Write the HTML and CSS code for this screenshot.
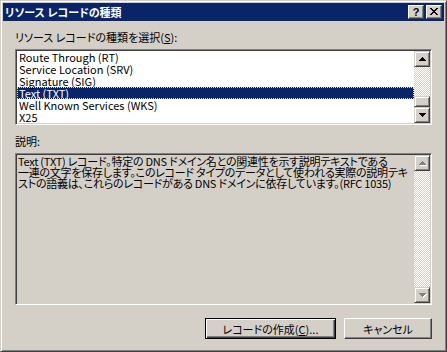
FILE: index.html
```html
<!DOCTYPE html>
<html lang="ja">
<head>
    <meta charset="UTF-8">
    <title>リソース レコードの種類</title>
    <link rel="stylesheet" href="styles.css">
</head>
<body>
    <div class="window">
        <!-- Title bar -->
        <div class="titlebar">
            <span class="title">リソース レコードの種類</span>
            <div class="caption-buttons">
                <div class="caption-btn help">?</div>
                <div class="caption-btn">
                    <svg width="8" height="7" viewBox="0 0 8 7" shape-rendering="crispEdges">
                        <path d="M0 0h2v1h-2zM6 0h2v1h-2zM1 1h2v1h-2zM5 1h2v1h-2zM2 2h4v1h-4zM3 3h2v1h-2zM2 4h4v1h-4zM1 5h2v1h-2zM5 5h2v1h-2zM0 6h2v1h-2zM6 6h2v1h-2z" fill="#000"/>
                    </svg>
                </div>
            </div>
        </div>

        <div class="content">
            <div class="label">リソース レコードの種類を選択(<u>S</u>):</div>

            <!-- Record type list -->
            <div class="listbox">
                <ul class="items">
                    <li>Route Through (RT)</li>
                    <li>Service Location (SRV)</li>
                    <li>Signature (SIG)</li>
                    <li class="selected">Text (TXT)</li>
                    <li>Well Known Services (WKS)</li>
                    <li>X25</li>
                </ul>
                <div class="scrollbar">
                    <div class="sb-btn">
                        <svg width="7" height="4" viewBox="0 0 7 4" shape-rendering="crispEdges"><path d="M3 0h1v1h1v1h1v1h1v1h-7v-1h1v-1h1v-1h1z" fill="#000"/></svg>
                    </div>
                    <div class="sb-track"></div>
                    <div class="sb-thumb"></div>
                    <div class="sb-btn">
                        <svg width="7" height="4" viewBox="0 0 7 4" shape-rendering="crispEdges"><path d="M0 0h7v1h-1v1h-1v1h-1v1h-1v-1h-1v-1h-1v-1h-1z" fill="#000"/></svg>
                    </div>
                </div>
            </div>

            <div class="label desc-label">説明:</div>

            <!-- Description (read only) -->
            <div class="description">
                <div class="desc-text">
                    Text (TXT) レコード。特定の DNS ドメイン名との関連性を示す説明テキストである<br>
                    一連の文字を保存します。このレコード タイプのデータとして使われる実際の説明テキ<br>
                    ストの語義は、これらのレコードがある DNS ドメインに依存しています。(RFC 1035)
                </div>
                <div class="scrollbar">
                    <div class="sb-btn disabled">
                        <svg width="8" height="5" viewBox="0 0 8 5" shape-rendering="crispEdges"><path d="M4 1h1v1h1v1h1v1h1v1h-7v-1z" fill="#fff"/><path d="M3 0h1v1h1v1h1v1h1v1h-7v-1h1v-1h1v-1h1z" fill="#808080"/></svg>
                    </div>
                    <div class="sb-track"></div>
                    <div class="sb-btn disabled">
                        <svg width="8" height="5" viewBox="0 0 8 5" shape-rendering="crispEdges"><path d="M1 1h7v1h-1v1h-1v1h-1v1h-1v-1h-1v-1h-1v-1h-1z" fill="#fff"/><path d="M0 0h7v1h-1v1h-1v1h-1v1h-1v-1h-1v-1h-1v-1h-1z" fill="#808080"/></svg>
                    </div>
                </div>
            </div>

            <!-- Buttons -->
            <div class="buttons">
                <div class="btn default">レコードの作成(<u>C</u>)...</div>
                <div class="btn cancel">キャンセル</div>
            </div>
        </div>
    </div>
</body>
</html>
```

FILE: styles.css
```css
* {
    box-sizing: border-box;
}

html, body {
    margin: 0;
}

body {
    font-family: "Noto Sans CJK JP", sans-serif;
    font-size: 11px;
    line-height: 12px;
    font-feature-settings: "palt";
    color: #000;
    background-color: #d4d0c8;
}

/* Window frame */
.window {
    width: 447px;
    height: 352px;
    padding: 2px;
    border: 1px solid;
    border-color: #d4d0c8 #404040 #404040 #d4d0c8;
    box-shadow: inset 1px 1px #fff, inset -1px -1px #808080;
    background-color: #d4d0c8;
    display: flex;
    flex-direction: column;
}

/* Title bar */
.titlebar {
    height: 18px;
    background-color: #0a246a;
    color: #fff;
    font-weight: bold;
    display: flex;
    align-items: center;
    justify-content: space-between;
    padding: 0 2px 0 2px;
}

.caption-buttons {
    display: flex;
    gap: 2px;
}

.caption-btn {
    width: 16px;
    height: 14px;
    background-color: #d4d0c8;
    border: 1px solid;
    border-color: #fff #404040 #404040 #fff;
    box-shadow: inset -1px -1px #808080;
    display: flex;
    align-items: center;
    justify-content: center;
    padding-bottom: 1px;
}

.caption-btn.help {
    font-family: "Liberation Sans", sans-serif;
    font-size: 11px;
    font-weight: bold;
    color: #000;
}

/* Content */
.content {
    flex: 1;
    padding: 10px 12px 0 12px;
    display: flex;
    flex-direction: column;
}

.label {
    height: 12px;
    margin-bottom: 6px;
}

.desc-label {
    margin-top: 10px;
}

/* Sunken boxes */
.listbox,
.description {
    display: flex;
    border: 1px solid;
    border-color: #808080 #fff #fff #808080;
    box-shadow: inset 1px 1px #404040, inset -1px -1px #d4d0c8;
    padding: 1px;
}

.listbox {
    height: 76px;
    background-color: #fff;
}

.items {
    flex: 1;
    list-style: none;
    margin: 0;
    padding: 0;
}

.items li {
    height: 12px;
    padding-left: 2px;
    white-space: nowrap;
}

.items li.selected {
    background-color: #0a246a;
    color: #fff;
    outline: 1px dotted #f5db95;
    outline-offset: -1px;
}

.description {
    height: 152px;
    background-color: #d4d0c8;
}

.desc-text {
    flex: 1;
    padding: 1px 0 0 1px;
    line-height: 11px;
    letter-spacing: -0.25px;
    white-space: nowrap;
}

/* Scrollbars */
.scrollbar {
    width: 16px;
    display: flex;
    flex-direction: column;
}

.sb-btn,
.sb-thumb {
    background-color: #d4d0c8;
    border: 1px solid;
    border-color: #d4d0c8 #404040 #404040 #d4d0c8;
    box-shadow: inset 1px 1px #fff, inset -1px -1px #808080;
}

.sb-btn {
    height: 16px;
    display: flex;
    align-items: center;
    justify-content: center;
}

.sb-btn.disabled svg {
    margin: 1px 0 0 1px;
}

.sb-thumb {
    height: 11px;
}

.sb-track {
    flex: 1;
    background: repeating-conic-gradient(#fff 0 25%, #d4d0c8 0 50%) 0 0 / 2px 2px;
}

/* Dialog buttons */
.buttons {
    display: flex;
    justify-content: flex-end;
    gap: 8px;
    margin-top: 13px;
}

.btn {
    height: 21px;
    display: flex;
    align-items: center;
    justify-content: center;
    background-color: #d4d0c8;
    border: 1px solid;
    border-color: #fff #404040 #404040 #fff;
    box-shadow: inset -1px -1px #808080;
}

.btn.default {
    width: 131px;
    border-color: #000;
    box-shadow: inset 1px 1px #fff, inset -1px -1px #404040, inset -2px -2px #808080;
}

.btn.cancel {
    width: 88px;
}
```
